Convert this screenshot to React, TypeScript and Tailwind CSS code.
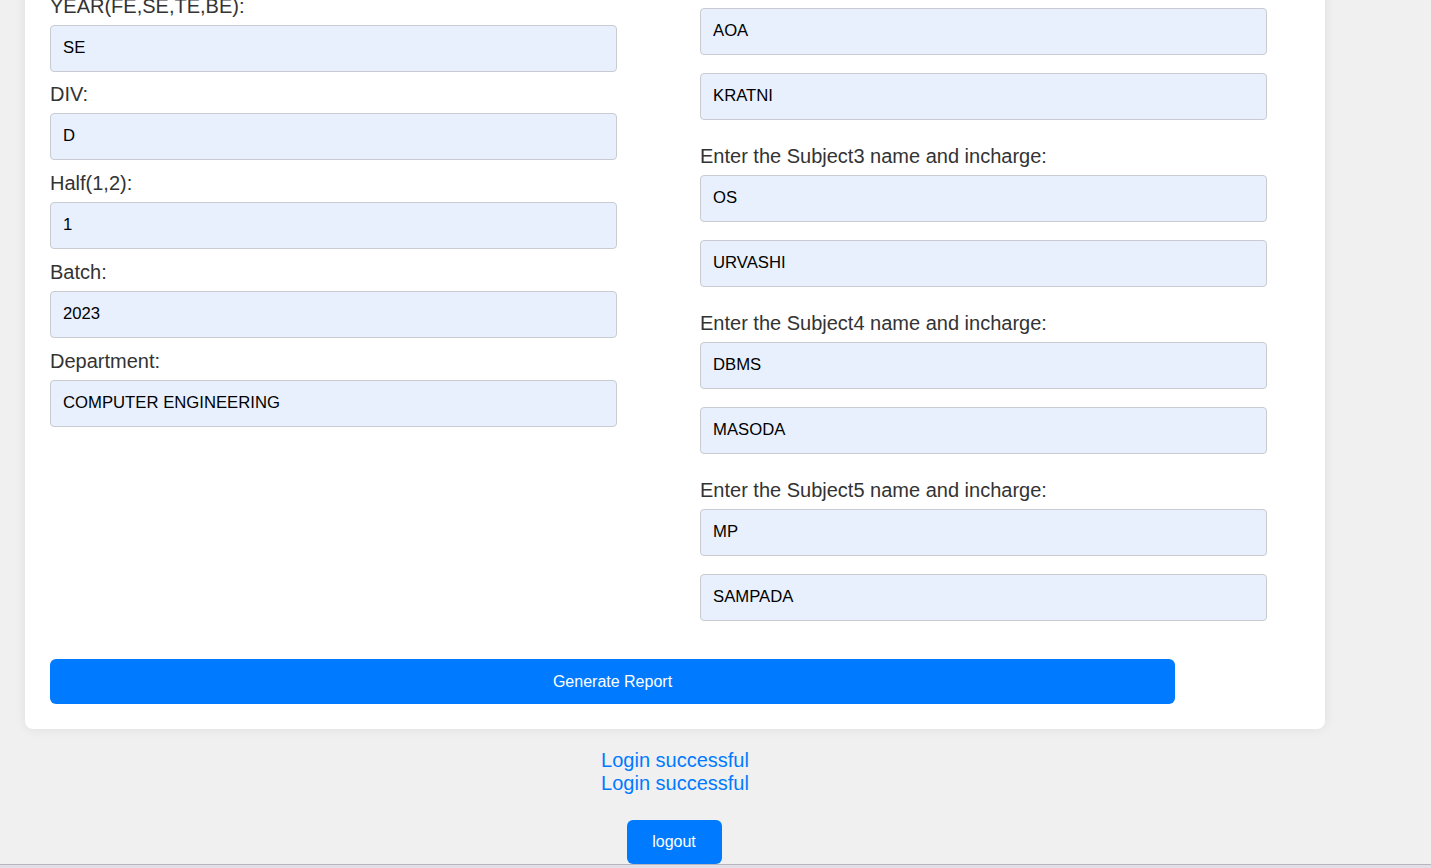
import React from "react";

const leftFields: [string, string][] = [
  ["YEAR(FE,SE,TE,BE):", "SE"],
  ["DIV:", "D"],
  ["Half(1,2):", "1"],
  ["Batch:", "2023"],
  ["Department:", "COMPUTER ENGINEERING"],
];

const subjects: [string, string, string][] = [
  ["Enter the Subject2 name and incharge:", "AOA", "KRATNI"],
  ["Enter the Subject3 name and incharge:", "OS", "URVASHI"],
  ["Enter the Subject4 name and incharge:", "DBMS", "MASODA"],
  ["Enter the Subject5 name and incharge:", "MP", "SAMPADA"],
];

function Field({ value, className = "" }: { value: string; className?: string }) {
  return (
    <input
      readOnly
      value={value}
      className={
        "block w-[567px] h-[47px] px-3 pb-[1px] bg-[#e8f0fe] border border-[#c8cbd0] rounded-[4px] text-[16.7px] text-black outline-none " +
        className
      }
    />
  );
}

export default function App() {
  return (
    <div
      className="relative h-[868px] overflow-hidden bg-[#f0f0f0]"
      style={{ fontFamily: '"Liberation Sans", Arial, sans-serif' }}
    >
      <div className="w-[1300px] ml-[25px]">
        <div className="-mt-[48px] bg-white rounded-[8px] shadow-[0_0_12px_rgba(0,0,0,0.08)] px-[25px] pt-[25px] pb-[25px]">
          <div className="flex items-start gap-[83px]">
            <div className="mt-[18px] flex flex-col">
              {leftFields.map(([label, value], i) => (
                <div key={label} className={"flex flex-col " + (i === 0 ? "mb-[11px]" : "mb-[12px]")}>
                  <label className="block text-[20px] leading-[23px] text-[#333] mb-[7px]">{label}</label>
                  <Field value={value} />
                </div>
              ))}
            </div>
            <div className="flex flex-col">
              {subjects.map(([label, a, b], i) => (
                <div key={label} className={"flex flex-col " + (i > 0 ? "mt-[24px]" : "")}>
                  <label className="block text-[20px] leading-[23px] text-[#333] pt-[1px] mb-[7px]">{label}</label>
                  <Field value={a} className="mb-[18px]" />
                  <Field value={b} />
                </div>
              ))}
            </div>
          </div>
          <button className="mt-[38px] w-[1125px] h-[45px] rounded-[6px] bg-[#007bff] text-white text-[16px]">
            Generate Report
          </button>
        </div>
        <div className="mt-[20px] flex flex-col items-center text-[#007bff] text-[20px] leading-[23px]">
          <p>Login successful</p>
          <p>Login successful</p>
          <button className="mt-[25px] mr-[2px] w-[95px] h-[44px] rounded-[6px] bg-[#007bff] text-white text-[16px] leading-[18px]">
            logout
          </button>
        </div>
      </div>
      <div className="absolute left-0 right-0 bottom-0 h-[4px] bg-[#e2dfe9] border-t border-[#b6b6bc]" />
    </div>
  );
}
